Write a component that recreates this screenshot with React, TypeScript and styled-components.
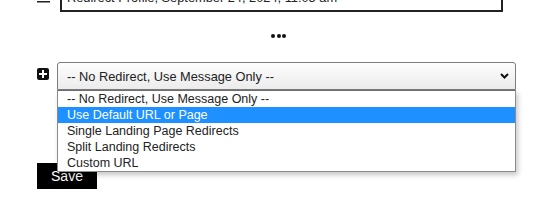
import React from 'react';
import styled, { createGlobalStyle } from 'styled-components';

const GlobalStyle = createGlobalStyle`
  html, body {
    margin: 0;
    padding: 0;
    background: #fff;
    overflow: hidden;
  }
  body {
    font-family: "Liberation Sans", Arial, sans-serif;
    color: #222;
  }
`;

const Page = styled.div`
  margin-top: -18px;
  padding-left: 37px;
  display: flex;
  flex-direction: column;
`;

const Row = styled.div<{ $gap: number }>`
  display: flex;
  align-items: center;
  gap: ${p => p.$gap}px;
`;

const HandleIcon = styled.svg`
  width: 13px;
  height: 12px;
  flex: none;
`;

const TextInput = styled.input`
  box-sizing: border-box;
  width: 443px;
  height: 30px;
  border: 2px solid #222;
  padding: 0 5px;
  font-family: "Liberation Sans", Arial, sans-serif;
  font-size: 12.8px;
  color: #222;
  outline: none;
  background: #fff;
`;

const Dots = styled.div`
  display: flex;
  gap: 1.5px;
  margin-top: 22px;
  padding-left: 234px;
  height: 4px;
`;

const Dot = styled.span`
  width: 4px;
  height: 4px;
  border-radius: 50%;
  background: #111;
`;

const SelectRow = styled.div`
  display: flex;
  align-items: flex-start;
  gap: 8px;
  margin-top: 24px;
`;

const PlusBox = styled.span`
  width: 12px;
  height: 12px;
  margin-top: 6px;
  border-radius: 2px;
  background: #111;
  display: flex;
  align-items: center;
  justify-content: center;
  flex: none;
`;

const SelectWrap = styled.div`
  position: relative;
  width: 459px;
  height: 28px;
`;

const SelectBox = styled.div`
  box-sizing: border-box;
  height: 28px;
  border: 1px solid #7d7d7d;
  border-radius: 3px 3px 0 0;
  background: linear-gradient(#fdfdfd, #ececec);
  display: flex;
  align-items: center;
  justify-content: space-between;
  padding: 0 6px 0 9px;
  font-size: 12.8px;
  color: #222;
`;

const Chevron = styled.svg`
  width: 9px;
  height: 6px;
`;

const OptionList = styled.ul`
  position: absolute;
  top: 28px;
  left: 0;
  right: 0;
  margin: 0;
  padding: 0;
  list-style: none;
  border: 1px solid #8c8c8c;
  border-top-color: #6e6e6e;
  background: #fff;
  box-shadow: 2px 3px 5px rgba(0, 0, 0, 0.22);
  z-index: 2;
`;

const Option = styled.li<{ $active?: boolean }>`
  height: 16px;
  line-height: 16px;
  padding-left: 9px;
  font-size: 12.5px;
  color: ${p => (p.$active ? '#fff' : '#222')};
  background: ${p => (p.$active ? '#1e90ff' : 'transparent')};
  white-space: nowrap;
`;

const SaveButton = styled.button`
  align-self: flex-start;
  margin-top: 73px;
  width: 60px;
  height: 26px;
  border: none;
  background: #000;
  color: #fff;
  font-family: "Liberation Sans", Arial, sans-serif;
  font-size: 14px;
  padding: 0;
  cursor: pointer;
`;

const options = [
  '-- No Redirect, Use Message Only --',
  'Use Default URL or Page',
  'Single Landing Page Redirects',
  'Split Landing Redirects',
  'Custom URL',
];

export default function App() {
  return (
    <>
      <GlobalStyle />
      <Page>
        <Row $gap={10}>
          <HandleIcon viewBox="0 0 13 12">
            <rect x="0" y="0" width="13" height="1.5" fill="#222" />
            <rect x="0" y="5" width="13" height="1.5" fill="#222" />
            <rect x="0" y="10" width="13" height="1.5" fill="#222" />
          </HandleIcon>
          <TextInput readOnly value="Redirect Profile, September 24, 2024, 11:05 am" />
        </Row>

        <Dots>
          <Dot />
          <Dot />
          <Dot />
        </Dots>

        <SelectRow>
          <PlusBox>
            <svg width="8" height="8" viewBox="0 0 8 8">
              <rect x="3" y="0" width="2" height="8" fill="#fff" />
              <rect x="0" y="3" width="8" height="2" fill="#fff" />
            </svg>
          </PlusBox>
          <SelectWrap>
            <SelectBox>
              <span>-- No Redirect, Use Message Only --</span>
              <Chevron viewBox="0 0 9 6">
                <polyline points="1,1 4.5,4.5 8,1" fill="none" stroke="#111" strokeWidth="2" />
              </Chevron>
            </SelectBox>
            <OptionList>
              {options.map((o, i) => (
                <Option key={o} $active={i === 1}>
                  {o}
                </Option>
              ))}
            </OptionList>
          </SelectWrap>
        </SelectRow>

        <SaveButton>Save</SaveButton>
      </Page>
    </>
  );
}
